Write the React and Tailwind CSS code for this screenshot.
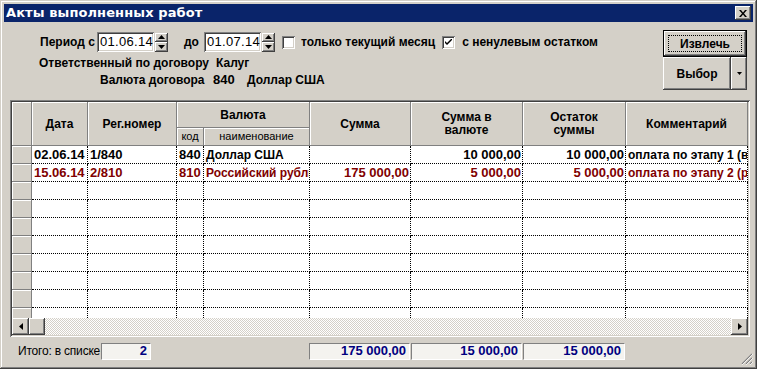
import React from "react";

const raised =
  "shadow-[inset_-1px_-1px_#404040,inset_1px_1px_#ffffff,inset_-2px_-2px_#808080,inset_2px_2px_#d4d0c8]";
const sunken =
  "shadow-[inset_1px_1px_#808080,inset_-1px_-1px_#ffffff,inset_2px_2px_#404040,inset_-2px_-2px_#d4d0c8]";
const hdr =
  "bg-[#d4d0c8] border-r border-b border-[#808080] shadow-[inset_1px_1px_#ffffff] flex items-center justify-center text-center";

function Spin() {
  return (
    <div className="flex flex-col w-[13px] h-[19px] ml-[1px] shrink-0">
      <div className={`${raised} bg-[#d4d0c8] h-[9px] flex items-center justify-center`}>
        <svg width="7" height="4" viewBox="0 0 7 4"><path d="M3.5 0 L7 4 L0 4 Z" fill="#000" /></svg>
      </div>
      <div className={`${raised} bg-[#d4d0c8] h-[10px] flex items-center justify-center`}>
        <svg width="7" height="4" viewBox="0 0 7 4"><path d="M0 0 L7 0 L3.5 4 Z" fill="#000" /></svg>
      </div>
    </div>
  );
}

function DateInput({ value }) {
  return (
    <div className={`${sunken} bg-white w-[57px] h-[20px] shrink-0 flex items-center pl-[3px] text-[13px] tracking-[0.3px] font-normal text-black whitespace-nowrap`}>
      {value}
    </div>
  );
}

function Check({ checked }) {
  return (
    <div className={`${sunken} bg-white w-[13px] h-[13px] flex items-center justify-center`}>
      {checked && (
        <svg width="7" height="7" viewBox="0 0 7 7">
          <path d="M0 2 L0 4 L2 6 L7 1 L7 -1 L2 4 Z" fill="#000" />
        </svg>
      )}
    </div>
  );
}

const cols = [56, 89, 27, 106, 101, 112, 103, 122];
const numeric = [true, true, true, false, true, true, true, false];
const right = [false, false, false, false, true, true, true, false];

const rows = [
  { c: "text-black", v: ["02.06.14", "1/840", "840", "Доллар США", "", "10 000,00", "10 000,00", "оплата по этапу 1 (в"] },
  { c: "text-[#800000]", v: ["15.06.14", "2/810", "810", "Российский рубль", "175 000,00", "5 000,00", "5 000,00", "оплата по этапу 2 (р"] },
];

function DataRow({ r }) {
  const vals = r ? r.v : cols.map(() => "");
  return (
    <div className={`flex h-[18px] ${r ? r.c : ""}`}>
      <div className="w-[20px] h-[18px] shrink-0 bg-[#d4d0c8] border-r border-b border-[#808080] shadow-[inset_1px_1px_#ffffff]" />
      {cols.map((w, i) => (
        <div
          key={i}
          style={{ width: w }}
          className={`shrink-0 h-[18px] bg-white border-r border-b border-dotted border-black overflow-hidden whitespace-nowrap flex items-center ${numeric[i] ? "text-[13px]" : ""} ${right[i] ? "justify-end pr-[1px]" : "pl-[2px]"}`}
        >
          {vals[i]}
        </div>
      ))}
    </div>
  );
}

function FooterBox({ w, v }) {
  return (
    <div
      className={`${w} h-[17px] shrink-0 bg-[#f4f3ef] border-t border-l border-[#808080] border-r-white border-b-white border-r border-b flex items-center justify-end pr-[3px] text-[#000080] font-bold text-[13px]`}
    >
      {v}
    </div>
  );
}

export default function App() {
  return (
    <div className="w-[757px] h-[369px] bg-[#d4d0c8] p-[4px] flex flex-col relative overflow-hidden font-['Liberation_Sans',Arial,sans-serif] text-[12px] text-black shadow-[inset_-1px_-1px_#404040,inset_1px_1px_#d4d0c8,inset_-2px_-2px_#808080,inset_2px_2px_#ffffff]">
      {/* title bar */}
      <div className="h-[18px] bg-[#0a246a] flex items-center justify-between pl-[2px] pr-[2px] shrink-0">
        <span className="text-white font-bold text-[13px] font-['DejaVu_Sans',sans-serif] tracking-[0.1px] whitespace-nowrap">Акты выполненных работ</span>
        <div className={`${raised} bg-[#d4d0c8] w-[16px] h-[14px] flex items-center justify-center`}>
          <svg width="8" height="7" viewBox="0 0 8 7">
            <path d="M0 0 L2 0 L4 2.5 L6 0 L8 0 L5 3.5 L8 7 L6 7 L4 4.5 L2 7 L0 7 L3 3.5 Z" fill="#000" />
          </svg>
        </div>
      </div>

      {/* top section */}
      <div className="h-[78px] flex shrink-0 font-bold">
        <div className="flex-1 flex flex-col pl-[36px] pt-[10px] whitespace-nowrap">
          <div className="flex items-center h-[20px]">
            <span className="w-[57px] shrink-0">Период с</span>
            <DateInput value="01.06.14" />
            <Spin />
            <span className="ml-[16px] w-[20px] shrink-0">до</span>
            <DateInput value="01.07.14" />
            <Spin />
            <div className="ml-[7px] shrink-0"><Check /></div>
            <span className="ml-[6px] shrink-0">только текущий месяц</span>
            <div className="ml-[7px] shrink-0"><Check checked /></div>
            <span className="ml-[7px] shrink-0">с ненулевым остатком</span>
          </div>
          <div className="flex h-[14px] items-center mt-[4px] -ml-[1px]">
            <span className="w-[177px] shrink-0">Ответственный по договору</span>
            <span className="shrink-0">Калуг</span>
          </div>
          <div className="flex h-[14px] items-center mt-[3px] ml-[60px]">
            <span className="w-[113px] shrink-0">Валюта договора</span>
            <span className="w-[34px] shrink-0 text-[13px]">840</span>
            <span className="shrink-0">Доллар США</span>
          </div>
        </div>
        <div className="w-[84px] mr-[6px] pt-[8px] flex flex-col shrink-0">
          <div className="h-[27px] border border-black">
            <div className={`${raised} bg-[#d4d0c8] h-full flex items-center justify-center`}>
              <div className="border border-dotted border-black h-[17px] w-[74px] flex items-center justify-center">Извлечь</div>
            </div>
          </div>
          <div className="h-[33px] flex">
            <div className={`${raised} bg-[#d4d0c8] flex-1 flex items-center justify-center`}>Выбор</div>
            <div className={`${raised} bg-[#d4d0c8] w-[16px] flex items-center justify-center`}>
              <svg width="5" height="3" viewBox="0 0 5 3"><path d="M0 0 L5 0 L2.5 3 Z" fill="#000" /></svg>
            </div>
          </div>
        </div>
      </div>

      {/* grid */}
      <div className={`ml-[6px] w-[740px] h-[237px] p-[2px] shrink-0 bg-white ${sunken}`}>
        <div className="w-[736px] h-[233px] overflow-hidden flex flex-col font-bold">
          {/* header */}
          <div className="flex h-[44px] shrink-0">
            <div className={`${hdr} w-[20px] shrink-0`} />
            <div className={`${hdr} w-[56px] shrink-0`}>Дата</div>
            <div className={`${hdr} w-[89px] shrink-0`}>Рег.номер</div>
            <div className="w-[133px] shrink-0 flex flex-col">
              <div className={`${hdr} h-[26px]`}>Валюта</div>
              <div className="flex h-[18px] font-normal text-[11px]">
                <div className={`${hdr} w-[27px]`}>код</div>
                <div className={`${hdr} w-[106px]`}>наименование</div>
              </div>
            </div>
            <div className={`${hdr} w-[101px] shrink-0`}>Сумма</div>
            <div className={`${hdr} w-[112px] shrink-0 leading-[13px]`}>Сумма в<br />валюте</div>
            <div className={`${hdr} w-[103px] shrink-0 leading-[13px]`}>Остаток<br />суммы</div>
            <div className={`${hdr} w-[122px] shrink-0`}>Комментарий</div>
          </div>
          {/* body */}
          <div className="h-[172px] overflow-hidden shrink-0">
            {rows.map((r, i) => (
              <DataRow key={i} r={r} />
            ))}
            {Array.from({ length: 8 }).map((_, i) => (
              <DataRow key={"e" + i} />
            ))}
          </div>
          {/* scrollbar */}
          <div className="h-[17px] flex shrink-0">
            <div className={`${raised} bg-[#d4d0c8] w-[17px] flex items-center justify-center`}>
              <svg width="4" height="7" viewBox="0 0 4 7"><path d="M4 0 L4 7 L0 3.5 Z" fill="#000" /></svg>
            </div>
            <div className={`${raised} bg-[#d4d0c8] w-[16px]`} />
            <div className="flex-1 bg-[image:repeating-conic-gradient(#d4d0c8_0_25%,#ffffff_0_50%)] bg-size-[2px_2px]" />
            <div className={`${raised} bg-[#d4d0c8] w-[17px] flex items-center justify-center`}>
              <svg width="4" height="7" viewBox="0 0 4 7"><path d="M0 0 L4 3.5 L0 7 Z" fill="#000" /></svg>
            </div>
          </div>
        </div>
      </div>

      {/* footer */}
      <div className="flex items-center h-[28px] pl-[14px] shrink-0">
        <span className="w-[83px] shrink-0 whitespace-nowrap tracking-[-0.2px]">Итого: в списке</span>
        <FooterBox w="w-[50px]" v="2" />
        <div className="w-[158px] shrink-0" />
        <FooterBox w="w-[101px]" v="175 000,00" />
        <div className="w-[1px] shrink-0" />
        <FooterBox w="w-[111px]" v="15 000,00" />
        <div className="w-[1px] shrink-0" />
        <FooterBox w="w-[102px]" v="15 000,00" />
      </div>

      {/* resize grip */}
      <svg className="absolute right-[4px] bottom-[4px]" width="12" height="12" viewBox="0 0 12 12">
        <path d="M11 1 L1 11 M11 5 L5 11 M11 9 L9 11" stroke="#808080" strokeWidth="1.2" />
        <path d="M12 1 L1 12 M12 5 L5 12 M12 9 L9 12" stroke="#ffffff" strokeWidth="0.8" />
      </svg>
    </div>
  );
}
